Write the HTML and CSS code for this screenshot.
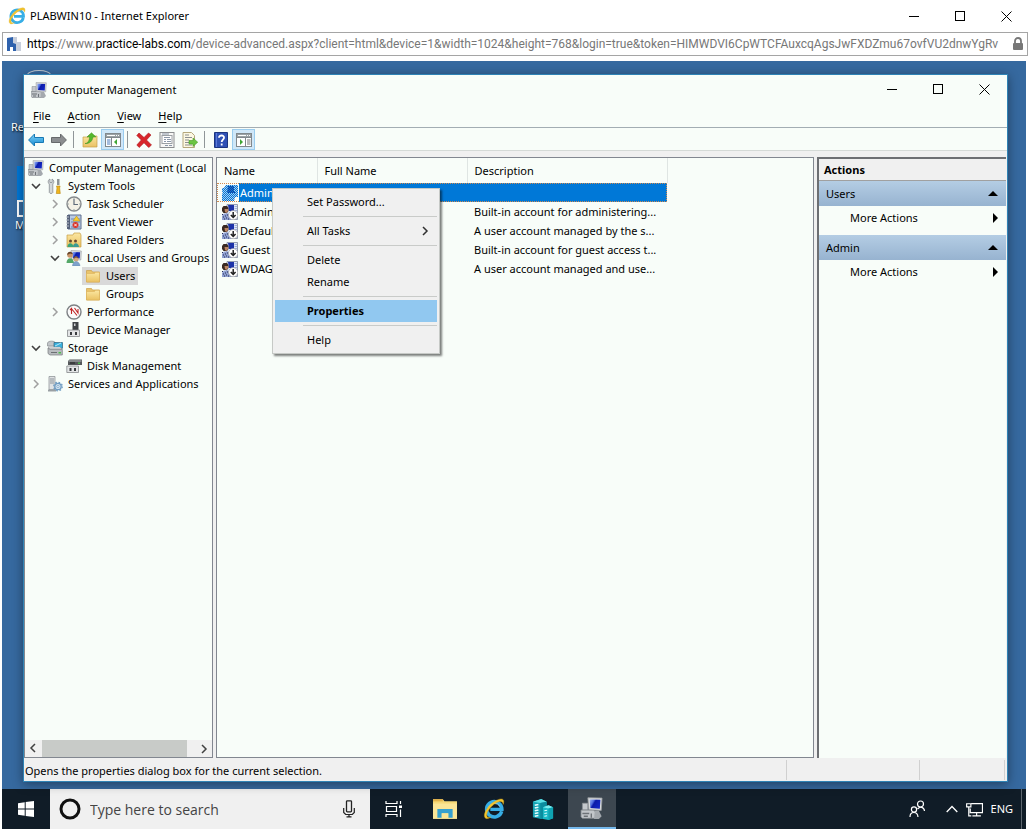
FILE: index.html
```html
<!DOCTYPE html>
<html lang="en">
<head>
<title>PLABWIN10 - Internet Explorer</title>

<meta charset="UTF-8">
<meta name="viewport" content="width=device-width, initial-scale=1.0">

<link rel="stylesheet" href="styles.css">
</head>

<body>

<!-- icon sprites -->
<svg class="sprites" aria-hidden="true">
  <defs>
    <linearGradient id="g-screen" x1="0" y1="0" x2="1" y2="0.5">
      <stop offset="0" stop-color="#9db6f0"/>
      <stop offset="0.35" stop-color="#4d6ce0"/>
      <stop offset="0.5" stop-color="#0c1ca8"/>
      <stop offset="1" stop-color="#1226c4"/>
    </linearGradient>
    <linearGradient id="g-blue" x1="0" y1="0" x2="0" y2="1">
      <stop offset="0" stop-color="#7fd4f8"/>
      <stop offset="1" stop-color="#1488d0"/>
    </linearGradient>
    <linearGradient id="g-folder" x1="0" y1="0" x2="0" y2="1">
      <stop offset="0" stop-color="#fbe7a2"/>
      <stop offset="1" stop-color="#eac263"/>
    </linearGradient>
    <symbol id="i-computer" viewBox="0 0 16 16">
      <path d="M1 4.500h4v5H1z" fill="#c4c8cc" stroke="#858a8f" stroke-width=".5"/>
      <path d="M0 9.500h9l2 1.500v3.500l-1 1H1l-1-1z" fill="#c2c6ca" stroke="#7d8388" stroke-width=".6"/>
      <path d="M1 12h5M2 14h3M7.500 12v3" stroke="#6d7277"/>
      <path d="M10 10h3l2 4-2 2H9.500z" fill="#a4a9ae"/>
      <path d="M5 .6l10.300 .2-.6 9-9-.6z" fill="#d9dbdc" stroke="#9a9ea2" stroke-width=".6"/>
      <path d="M6.300 1.800l7.800 .2-.4 6.500-6.900-.5z" fill="url(#g-screen)"/>
    </symbol>
    <symbol id="i-ie" viewBox="0 0 18 18">
      <path d="M15.300 10.800A6.300 6.300 0 1 1 15.500 9.300H6" fill="none" stroke="#37aee6" stroke-width="2.800"/>
      <path d="M4 8a5.600 5.600 0 0 1 10-1" fill="none" stroke="#9adcf7" stroke-width=".8"/>
      <path d="M2 16.500C-1 14 4 6 9 3s8-3 8 0c0 .8-.2 1.500-.6 2.300C16.500 2.500 14 2 10 4.500S1.500 13 3.500 15.500c.6.700 1.800.5 3 0-1.700 1.300-3.500 1.800-4.500 1z" fill="#f2c531" stroke="#d9a614" stroke-width=".3"/>
    </symbol>
    <symbol id="i-labs" viewBox="0 0 16 16">
      <path d="M6 1h5v5h4v9H8z" fill="#c8cfdc"/>
      <path d="M1 2l6-1v6l3 1v7H7v-4H4v4H1z" fill="#2f62ad"/>
    </symbol>
    <symbol id="i-lock" viewBox="0 0 12 14">
      <path d="M3 7V4a3 3 0 0 1 6 0v3" fill="none" stroke="#777" stroke-width="1.800"/>
      <rect x="1" y="6" width="10" height="7" rx="1" fill="#777"/>
    </symbol>
    <symbol id="i-min" viewBox="0 0 11 11"><path d="M0 5.500h10" stroke="#000"/></symbol>
    <symbol id="i-max" viewBox="0 0 11 11"><rect x=".5" y=".5" width="9" height="9" fill="none" stroke="#000"/></symbol>
    <symbol id="i-close" viewBox="0 0 11 11"><path d="M.5 .5l10 10M10.500 .5l-10 10" stroke="#000"/></symbol>
    <symbol id="i-back" viewBox="0 0 16 16"><path d="M.6 8L6.500 2v3.500h9v5h-9V14z" fill="url(#g-blue)" stroke="#1779b4"/></symbol>
    <symbol id="i-forward" viewBox="0 0 16 16"><path d="M15.400 8L9.500 2v3.500h-9v5h9V14z" fill="#8b8e90" stroke="#66696b"/></symbol>
    <symbol id="i-up" viewBox="0 0 16 16">
      <path d="M1 5h5l1-2h3l1 1h4v11H1z" fill="url(#g-folder)" stroke="#c79e45" stroke-width=".7"/>
      <path d="M3 11.500C6 11.500 7.500 8 7.500 5H5L9.500 .8 14 5h-3C10.500 9 7.500 12 3 11.500z" fill="#54b82e" stroke="#3a8f1c" stroke-width=".5"/>
    </symbol>
    <symbol id="i-pane-left" viewBox="0 0 16 16">
      <rect x=".5" y="1.500" width="15" height="13" fill="#fff" stroke="#81888c"/>
      <path d="M1 2h14v3H1z" fill="#9ba2a5"/>
      <path d="M2 3.500h8M11 3.500h1M13 3.500h1" stroke="#fff"/>
      <path d="M6.500 6v8M1 5.500h14" stroke="#81888c"/>
      <path d="M2 8h3.500M2 10h3.500M2 12h3.500" stroke="#4c7cc0"/>
      <path d="M12 7v6L9 10z" fill="#3fa535"/>
    </symbol>
    <symbol id="i-pane-right" viewBox="0 0 16 16">
      <rect x=".5" y="1.500" width="15" height="13" fill="#fff" stroke="#81888c"/>
      <path d="M1 2h14v3H1z" fill="#9ba2a5"/>
      <path d="M2 3.500h8M11 3.500h1M13 3.500h1" stroke="#fff"/>
      <path d="M9.500 6v8M1 5.500h14" stroke="#81888c"/>
      <path d="M11 8h3.500M11 10h3.500M11 12h3.500" stroke="#777"/>
      <path d="M4 7v6l3-3z" fill="#3fa535"/>
    </symbol>
    <symbol id="i-delete" viewBox="0 0 16 16">
      <path d="M3 1l5 4.500L12.500 1 15 3l-4.500 5 5 5-2.800 2.500L8 10.800 3.200 15.500.8 13l4.500-5L.8 3.500z" fill="#d8262b" stroke="#a8171b" stroke-width=".6"/>
    </symbol>
    <symbol id="i-props" viewBox="0 0 16 16">
      <rect x="1" y=".5" width="14" height="15" fill="#f7f7f5" stroke="#8b8e90"/>
      <rect x="3" y="3.500" width="10" height="8" fill="#fff" stroke="#9ba0a4"/>
      <path d="M5 5.500h6M5 7.500h2M8 7.500h4M5 9.500h2M8 9.500h4M3 2h7M6 13.500h3M10 13.500h3" stroke="#8a97a8"/>
    </symbol>
    <symbol id="i-export" viewBox="0 0 16 16">
      <path d="M1 .5h8.500l3 3v12H1z" fill="#fcf8e2" stroke="#b4a77c"/>
      <path d="M3 5.500h7M3 8h4M3 10.500h4M3 13h7M3 3h4" stroke="#8b8e90"/>
      <path d="M7 8.500h4V6l4.700 4.200L11 14.500V12H7z" fill="#6cc644" stroke="#459a25" stroke-width=".6"/>
    </symbol>
    <symbol id="i-help" viewBox="0 0 14 16">
      <path d="M.5 .5h13v15H.5z" fill="#2f51b5" stroke="#1c3580"/>
      <path d="M2.500 1v14" stroke="#5c7ad6"/>
      <path d="M5 5.800C5 2.700 10.400 2.800 10 5.800c-.2 1.700-2.300 2-2.300 4.200M7.700 11.500v2" fill="none" stroke="#fff" stroke-width="1.800"/>
    </symbol>
    <symbol id="i-down" viewBox="0 0 10 10"><path d="M1 3l4 4 4-4" fill="none" stroke="#404040" stroke-width="1.600"/></symbol>
    <symbol id="i-right" viewBox="0 0 10 10"><path d="M3 1l4 4-4 4" fill="none" stroke="#a0a0a0" stroke-width="1.500"/></symbol>
    <symbol id="i-tools" viewBox="0 0 16 16">
      <path d="M3 1v3.500h2V1c2 .8 2.500 3.500.8 5v8.500c-.5 1.300-3 1.300-3.500 0V6C.5 4.500 1 1.800 3 1z" fill="#d4d8da" stroke="#7d8386" stroke-width=".7"/>
      <path d="M10 1h2.500v6H10z" fill="#8e9497"/>
      <path d="M9.500 8h3.600l-.5 2 .7 5.500H9.300L10 10z" fill="#f0b51d" stroke="#b9860d" stroke-width=".6"/>
    </symbol>
    <symbol id="i-clock" viewBox="0 0 16 16">
      <circle cx="8" cy="8" r="7" fill="#f4f1e6" stroke="#85898c" stroke-width="1.400"/>
      <path d="M8 3v5.500h4" fill="none" stroke="#5f6b7a" stroke-width="1.200"/>
      <path d="M8 2v1M8 13v1M2 8h1M13 8h1" stroke="#9aa"/>
    </symbol>
    <symbol id="i-event" viewBox="0 0 16 16">
      <path d="M2 1h13v14H2z" fill="#b9cbe6" stroke="#5d6f8d"/>
      <path d="M1 1h3v14H1z" fill="#56627a"/>
      <path d="M0 3h3M0 6h3M0 9h3M0 12h3" stroke="#b7bdc6"/>
      <path d="M5 5h9M5 8h9M5 13h9" stroke="#6f87ae"/>
      <path d="M10.500 2l3.500 5H7z" fill="#f8cc30" stroke="#b58a0d" stroke-width=".5"/>
      <circle cx="9.500" cy="11" r="3" fill="#d93227"/>
      <path d="M8.200 9.700l2.600 2.600M10.800 9.700l-2.600 2.600" stroke="#fff" stroke-width=".9"/>
    </symbol>
    <symbol id="i-shared" viewBox="0 0 16 16">
      <path d="M1 3h6l1-2h6l1 2v12H1z" fill="url(#g-folder)" stroke="#c79e45" stroke-width=".7"/>
      <circle cx="4.500" cy="9" r="1.500" fill="#6a4a30"/>
      <circle cx="9.500" cy="9" r="1.500" fill="#6a4a30"/>
      <path d="M1.500 15c0-5 5.500-5 6 0z" fill="#3aa57a"/>
      <path d="M7 15c0-5 5.500-5 6 0z" fill="#3b9a94"/>
    </symbol>
    <symbol id="i-users" viewBox="0 0 16 16">
      <path d="M5 .6l10.300 .4-.5 9-9.300-.6z" fill="#e0e2e4" stroke="#8e9296" stroke-width=".6"/>
      <path d="M6.300 2l7.800 .2-.4 6.200-6.900-.5z" fill="url(#g-screen)"/>
      <circle cx="4" cy="5" r="2.800" fill="#c89468"/>
      <path d="M1.200 5c0-4.500 5.500-4 5.600-.8L4 3.500z" fill="#65432a"/>
      <path d="M.5 13c0-6.500 7-6.500 7.500 0z" fill="#54a868"/>
      <circle cx="10" cy="9" r="2.500" fill="#d6a77d"/>
      <path d="M7.500 9c0-4 5-3.500 5-.5L10 7.500z" fill="#725138"/>
      <path d="M6.500 16c0-6 7-6 7.500 0z" fill="#7fa3cc" stroke="#587ba5" stroke-width=".4"/>
    </symbol>
    <symbol id="i-folder" viewBox="0 0 16 16">
      <path d="M1.500 2.500h5l1 1.500h7v10h-13z" fill="#e9c46c" stroke="#cda048" stroke-width=".7"/>
      <path d="M1.500 5.500h8l1-1.200h4V14h-13z" fill="url(#g-folder)" stroke="#dbb25a" stroke-width=".6"/>
    </symbol>
    <symbol id="i-perf" viewBox="0 0 16 16">
      <circle cx="8" cy="8" r="7" fill="#fafafa" stroke="#7d8184" stroke-width="1.400"/>
      <path d="M4 6l1.500-1.500V10M5 4l6 7.500M8.500 4L12 9V5" fill="none" stroke="#c22727" stroke-width="1.100"/>
    </symbol>
    <symbol id="i-device" viewBox="0 0 16 16">
      <path d="M6.500 0h6v9h-6z" fill="#3f4346"/>
      <path d="M8 1.500h1.500V4H8z" fill="#cfd2d4"/>
      <path d="M1.500 8h12v6.500h-12z" fill="#e3e5e6" stroke="#85898c" stroke-width=".8"/>
      <path d="M4 10h2v3H4zM9 10h2v3H9z" fill="#383c3f"/>
    </symbol>
    <symbol id="i-storage" viewBox="0 0 16 16">
      <path d="M.5 3C1 .5 8 .5 8.500 3v3h-8z" fill="#c2c6c9" stroke="#7c8184" stroke-width=".6"/>
      <path d="M7 2.500h8.500v5.800H7z" fill="#38b0dd" stroke="#2f617c" stroke-width=".7"/>
      <path d="M8 6l6-3" stroke="#b9e8f7"/>
      <path d="M1 7h12l2 2H3z" fill="#e6e8e9" stroke="#8b8f92" stroke-width=".5"/>
      <path d="M1 8v5.500l2 1.500h12.300V9.300H3z" fill="#b8bcbf" stroke="#75797c" stroke-width=".7"/>
      <path d="M4 12.500h6" stroke="#6c7073"/>
      <path d="M11.500 12h2.500v1.500h-2.500z" fill="#4cc04a"/>
    </symbol>
    <symbol id="i-disk" viewBox="0 0 16 16">
      <path d="M2 3l1.500-1.500H16V7H2z" fill="#55585b"/>
      <path d="M2.500 3h13" stroke="#b5b9bb"/>
      <path d="M4 5h5" stroke="#222"/>
      <path d="M12 4.500h2V6h-2z" fill="#48b84a"/>
      <path d="M.8 8h11.700v6.500H.8z" fill="#e3e5e6" stroke="#85898c" stroke-width=".8"/>
      <path d="M3.500 10h2v3h-2zM8 10h2v3H8z" fill="#383c3f"/>
    </symbol>
    <symbol id="i-services" viewBox="0 0 16 16">
      <path d="M2 .5h6v13H2z" fill="#dfe2e4" stroke="#868b8f" stroke-width=".7"/>
      <path d="M3 3h4M3 5h4M3 7h4" stroke="#8d959b"/>
      <path d="M1 14.500h8" stroke="#9aa0a4" stroke-width="2"/>
      <circle cx="11" cy="10.500" r="3.200" fill="#cfe0ee" stroke="#6f9cc2" stroke-width="1.300"/>
      <circle cx="11" cy="10.500" r="4.300" fill="none" stroke="#6f9cc2" stroke-width="1.200" stroke-dasharray="1.700 1.670"/>
      <circle cx="11" cy="10.500" r="1.100" fill="#fff" stroke="#6f9cc2" stroke-width=".7"/>
    </symbol>
    <symbol id="i-user" viewBox="0 0 16 16">
      <path d="M5 .5h10.500v15H4z" fill="#dfe8f8" stroke="#6f7890" stroke-width=".7"/>
      <path d="M6 1h6v6H7z" fill="#1d33a8"/>
      <path d="M12.500 2.500H15M12.500 4.500H15M12 6.500h3" stroke="#8fa3d0" stroke-width=".8"/>
      <path d="M0 4l1.500-2H5l1.500 2v3L5 9H1.500L0 7z" fill="#3b2a22"/>
      <path d="M2.500 5H6v2L4.500 9 3 8z" fill="#b98463"/>
      <path d="M0 16v-4l2-2.500h4L8.500 12l.5 4z" fill="#8fa0d2"/>
      <path d="M0 10.500h1M1 13h1M3 12h1M4 14h1M2 15h1M5 11h1M6 15h1" stroke="#232c55"/>
    </symbol>
    <symbol id="i-badge" viewBox="0 0 16 16">
      <circle cx="11.200" cy="11.200" r="4.600" fill="#fff" stroke="#999" stroke-width=".6"/>
      <path d="M11.200 8v5M8.800 11l2.400 2.500 2.400-2.500" fill="none" stroke="#222" stroke-width="1.500"/>
    </symbol>
    <pattern id="p-dither" width="2" height="2" patternUnits="userSpaceOnUse">
      <path d="M0 0h1v1H0zM1 1h1v1H1z" fill="#0078d7"/>
    </pattern>
    <symbol id="i-dither" viewBox="0 0 16 16">
      <path d="M4 0h12v12h-3l-1 4H0V9l1-1-1-2V3h2z" fill="#a8cdf0"/>
      <path d="M6 1h6v5l2 2H5z" fill="#1a3d9c"/>
      <path d="M4 0h12v12h-3l-1 4H0V9l1-1-1-2V3h2z" fill="url(#p-dither)"/>
    </symbol>
    <symbol id="i-windows" viewBox="0 0 16 16">
      <path d="M0 2.300l6.700-1v6.200H0zM7.700 1.100L16 0v7.500H7.700zM0 8.500h6.700v6.200l-6.700-1zM7.700 8.500H16V16l-8.300-1.100z" fill="#fff"/>
    </symbol>
    <symbol id="i-cortana" viewBox="0 0 22 22"><circle cx="11" cy="11" r="9" fill="none" stroke="#111" stroke-width="3"/></symbol>
    <symbol id="i-mic" viewBox="0 0 12 18">
      <rect x="3.500" y=".8" width="5" height="11" rx=".8" fill="none" stroke="#222" stroke-width="1.300"/>
      <path d="M.7 8v4.500l2 2h6.600l2-2V8M6 14.500V17M3.500 16.800h5" fill="none" stroke="#222" stroke-width="1.200"/>
    </symbol>
    <symbol id="i-taskview" viewBox="0 0 18 16">
      <path d="M1 0v2.500h11V0M1 16v-2.500h11V16M1.500 5.500h10v5h-10zM15.500 0v3M15.500 8.500V16" fill="none" stroke="#fff" stroke-width="1.200"/>
      <path d="M14 4.500h3v2.500h-3z" fill="#fff"/>
    </symbol>
    <symbol id="i-explorer" viewBox="0 0 22 20">
      <path d="M0 1h9l1.500 2H22v16H0z" fill="#f6d978"/>
      <path d="M0 1h9v2H0z" fill="#e3b24a"/>
      <path d="M0 5h22v14H0z" fill="#fbe596"/>
      <path d="M4 10h14v8h-4v-4H8v4H4z" fill="#36a0cf"/>
      <path d="M8 14h6v4H8z" fill="#fbe596"/>
    </symbol>
    <symbol id="i-server" viewBox="0 0 24 24">
      <path d="M1 4l9-3 6 3v18l-6 1-9-2z" fill="#15a3b4"/>
      <path d="M1 4l9-3 6 3-7 1.500z" fill="#5de0e6"/>
      <path d="M9 5.500L16 4v18l-7 1z" fill="#0b8c9e"/>
      <path d="M3 8l4-1M3 11l4-1M3 14l4-1M3 17l4-1M3 20l4-1" stroke="#e8ffff" stroke-width="1.600"/>
      <path d="M12 10l6-2 5 2v12l-5 2-6-1z" fill="#19b9c6"/>
      <path d="M12 10l6-2 5 2-5 1.500z" fill="#7cecef"/>
      <path d="M13.500 14l3-.6M13.500 17l3-.6M13.500 20l3-.6" stroke="#d9ffff" stroke-width="1.200"/>
      <path d="M18 11.500l5-1.500v12l-5 2z" fill="#0fa2b2"/>
    </symbol>
    <symbol id="i-people" viewBox="0 0 18 18">
      <circle cx="12.500" cy="4" r="3" fill="none" stroke="#fff" stroke-width="1.200"/>
      <circle cx="6" cy="9.500" r="2.600" fill="none" stroke="#fff" stroke-width="1.200"/>
      <path d="M2 17c0-6 7.500-6 8 0M9.500 9c2.500-3 6.500-2 7 2" fill="none" stroke="#fff" stroke-width="1.200"/>
    </symbol>
    <symbol id="i-caret" viewBox="0 0 12 8"><path d="M.7 7L6 1.500 11.300 7" fill="none" stroke="#fff" stroke-width="1.300"/></symbol>
    <symbol id="i-network" viewBox="0 0 16 14">
      <path d="M5 1.500h10.500v8.500H4V6M10 10v3M6 13h8M.6 1.600h4v3h-4zM2.600 5v8H5" fill="none" stroke="#fff" stroke-width="1.100"/>
    </symbol>
  </defs>
</svg>

<header class="titlebar">
  <svg class="icon icon-ie"><use href="#i-ie"/></svg>
  <h1 class="title">PLABWIN10 - Internet Explorer</h1>
  <button class="winbtn" title="Minimize"><svg><use href="#i-min"/></svg></button>
  <button class="winbtn" title="Maximize"><svg><use href="#i-max"/></svg></button>
  <button class="winbtn" title="Close"><svg><use href="#i-close"/></svg></button>
</header>

<div class="address">
  <svg class="icon"><use href="#i-labs"/></svg>
  <div class="url"><b>https</b>://www.<b>practice-labs.com</b>/device-advanced.aspx?client=html&amp;device=1&amp;width=1024&amp;height=768&amp;login=true&amp;token=HIMWDVI6CpWTCFAuxcqAgsJwFXDZmu67ovfVU2dnwYgRv</div>
  <svg class="lock"><use href="#i-lock"/></svg>
</div>

<main class="remote">
  <div class="desktop">
    <span class="shortcut bin">Re</span>
    <span class="shortcut edge">M</span>

    <section class="window">
      <div class="titlebar">
        <svg class="icon"><use href="#i-computer"/></svg>
        <h2 class="title">Computer Management</h2>
        <button class="winbtn" title="Minimize"><svg><use href="#i-min"/></svg></button>
        <button class="winbtn" title="Maximize"><svg><use href="#i-max"/></svg></button>
        <button class="winbtn" title="Close"><svg><use href="#i-close"/></svg></button>
      </div>

      <nav class="menubar">
        <button><u>F</u>ile</button>
        <button><u>A</u>ction</button>
        <button><u>V</u>iew</button>
        <button><u>H</u>elp</button>
      </nav>

      <div class="toolbar">
        <button title="Back"><svg class="icon"><use href="#i-back"/></svg></button>
        <button title="Forward"><svg class="icon"><use href="#i-forward"/></svg></button>
        <i></i>
        <button title="Up one level"><svg class="icon"><use href="#i-up"/></svg></button>
        <button class="on" title="Show/Hide Console Tree"><svg class="icon"><use href="#i-pane-left"/></svg></button>
        <i></i>
        <button title="Delete"><svg class="icon"><use href="#i-delete"/></svg></button>
        <button title="Properties"><svg class="icon"><use href="#i-props"/></svg></button>
        <button title="Export List"><svg class="icon"><use href="#i-export"/></svg></button>
        <i></i>
        <button title="Help"><svg class="icon"><use href="#i-help"/></svg></button>
        <button class="on" title="Show/Hide Action Pane"><svg class="icon"><use href="#i-pane-right"/></svg></button>
      </div>

      <div class="panes">
        <div class="pane tree">
          <div class="nodes">
            <a href="#" class="label"><svg class="icon"><use href="#i-computer"/></svg>Computer Management (Local</a>
            <ul>
              <li>
                <div class="node"><svg class="twist"><use href="#i-down"/></svg><a href="#" class="label"><svg class="icon"><use href="#i-tools"/></svg>System Tools</a></div>
                <ul>
                  <li class="node"><svg class="twist"><use href="#i-right"/></svg><a href="#" class="label"><svg class="icon"><use href="#i-clock"/></svg>Task Scheduler</a></li>
                  <li class="node"><svg class="twist"><use href="#i-right"/></svg><a href="#" class="label"><svg class="icon"><use href="#i-event"/></svg>Event Viewer</a></li>
                  <li class="node"><svg class="twist"><use href="#i-right"/></svg><a href="#" class="label"><svg class="icon"><use href="#i-shared"/></svg>Shared Folders</a></li>
                  <li>
                    <div class="node"><svg class="twist"><use href="#i-down"/></svg><a href="#" class="label"><svg class="icon"><use href="#i-users"/></svg>Local Users and Groups</a></div>
                    <ul>
                      <li class="node"><svg class="twist"></svg><a href="#" class="label current"><svg class="icon"><use href="#i-folder"/></svg>Users</a></li>
                      <li class="node"><svg class="twist"></svg><a href="#" class="label"><svg class="icon"><use href="#i-folder"/></svg>Groups</a></li>
                    </ul>
                  </li>
                  <li class="node"><svg class="twist"><use href="#i-right"/></svg><a href="#" class="label"><svg class="icon"><use href="#i-perf"/></svg>Performance</a></li>
                  <li class="node"><svg class="twist"></svg><a href="#" class="label"><svg class="icon"><use href="#i-device"/></svg>Device Manager</a></li>
                </ul>
              </li>
              <li>
                <div class="node"><svg class="twist"><use href="#i-down"/></svg><a href="#" class="label"><svg class="icon"><use href="#i-storage"/></svg>Storage</a></div>
                <ul>
                  <li class="node"><svg class="twist"></svg><a href="#" class="label"><svg class="icon"><use href="#i-disk"/></svg>Disk Management</a></li>
                </ul>
              </li>
              <li class="node"><svg class="twist"><use href="#i-right"/></svg><a href="#" class="label"><svg class="icon"><use href="#i-services"/></svg>Services and Applications</a></li>
            </ul>
          </div>
          <div class="scrollbar">
            <button class="flip" title="Scroll left"><svg><use href="#i-right"/></svg></button>
            <div class="track"><div class="thumb"></div></div>
            <button title="Scroll right"><svg><use href="#i-right"/></svg></button>
          </div>
        </div>

        <div class="pane list">
          <table>
            <thead>
              <tr><th class="c-name">Name</th><th class="c-full">Full Name</th><th class="c-desc">Description</th></tr>
            </thead>
            <tbody>
              <tr class="selected"><td><div class="user"><svg class="icon"><use href="#i-dither"/></svg><span>Admin</span></div></td><td></td><td></td></tr>
              <tr><td><div class="user"><svg class="icon"><use href="#i-user"/><use href="#i-badge"/></svg><span>Administrator</span></div></td><td></td><td>Built-in account for administering...</td></tr>
              <tr><td><div class="user"><svg class="icon"><use href="#i-user"/><use href="#i-badge"/></svg><span>DefaultAcc...</span></div></td><td></td><td>A user account managed by the s...</td></tr>
              <tr><td><div class="user"><svg class="icon"><use href="#i-user"/><use href="#i-badge"/></svg><span>Guest</span></div></td><td></td><td>Built-in account for guest access t...</td></tr>
              <tr><td><div class="user"><svg class="icon"><use href="#i-user"/><use href="#i-badge"/></svg><span>WDAGUtil...</span></div></td><td></td><td>A user account managed and use...</td></tr>
            </tbody>
          </table>

          <div class="popup">
            <button>Set Password...</button>
            <hr>
            <button>All Tasks<svg><use href="#i-right"/></svg></button>
            <hr>
            <button>Delete</button>
            <button>Rename</button>
            <hr>
            <button class="hot">Properties</button>
            <hr>
            <button>Help</button>
          </div>
        </div>

        <aside class="actions">
          <h3>Actions</h3>
          <button class="group">Users<span class="tri-up"></span></button>
          <button class="more">More Actions<span class="tri-right"></span></button>
          <button class="group">Admin<span class="tri-up"></span></button>
          <button class="more">More Actions<span class="tri-right"></span></button>
        </aside>
      </div>

      <footer class="status">
        <span class="message">Opens the properties dialog box for the current selection.</span>
        <span class="cell-a"></span>
        <span class="cell-b"></span>
      </footer>
    </section>
  </div>

  <div class="taskbar">
    <button class="start" title="Start"><svg><use href="#i-windows"/></svg></button>
    <label class="search">
      <svg class="cortana"><use href="#i-cortana"/></svg>
      <input type="text" placeholder="Type here to search" aria-label="Search">
      <svg class="mic"><use href="#i-mic"/></svg>
    </label>
    <button class="task view" title="Task View"><svg><use href="#i-taskview"/></svg></button>
    <button class="task" title="File Explorer"><svg><use href="#i-explorer"/></svg></button>
    <button class="task" title="Internet Explorer"><svg><use href="#i-ie"/></svg></button>
    <button class="task" title="Server Manager"><svg><use href="#i-server"/></svg></button>
    <button class="task active" title="Computer Management"><svg><use href="#i-computer"/></svg></button>
    <div class="tray">
      <button title="People"><svg class="people"><use href="#i-people"/></svg></button>
      <button title="Show hidden icons"><svg class="caret"><use href="#i-caret"/></svg></button>
      <button title="Network"><svg class="net"><use href="#i-network"/></svg></button>
      <button class="lang">ENG</button>
      <button class="peek" title="Show desktop"></button>
    </div>
  </div>
</main>

</body>
</html>
```

FILE: styles.css
```css
* {
  box-sizing: border-box;
}
html {
  background: #fff;
}
body {
  min-height: 100vh;
  margin: 0;
  display: flex;
  flex-direction: column;
  font: 11px/18px "Noto Sans", "Open Sans", sans-serif;
  color: #000;
}
button {
  margin: 0;
  padding: 0;
  border: 0;
  background: none;
  font: inherit;
  color: inherit;
  display: flex;
  align-items: center;
}
a {
  color: inherit;
  text-decoration: none;
}
ul {
  margin: 0;
  padding: 0;
  list-style: none;
}
svg {
  flex: none;
}
.sprites {
  position: absolute;
  width: 0;
  height: 0;
}
.icon {
  width: 16px;
  height: 16px;
}
.icon-ie {
  width: 18px;
  height: 18px;
}

/* title bars, outer and inner */
.titlebar {
  height: 32px;
  padding: 0 3px 0 8px;
  display: flex;
  align-items: center;
  gap: 4px;
}
.title {
  flex: 1;
  margin: 0;
  font-size: 11px;
  font-weight: 400;
}
.winbtn {
  width: 42px;
  height: 30px;
  justify-content: center;
}
.winbtn svg {
  width: 11px;
  height: 11px;
}

.address {
  height: 24px;
  margin: 0 2px 5px;
  padding: 0 3px;
  border: 1px solid #a5a5a5;
  display: flex;
  align-items: center;
  gap: 5px;
}
.url {
  flex: 1;
  min-width: 0;
  overflow: hidden;
  white-space: nowrap;
  font-family: Roboto, "Open Sans", sans-serif;
  font-size: 12px;
  color: #777;
}
.url b {
  font-weight: 400;
  color: #000;
}
.lock {
  width: 12px;
  height: 14px;
}

.remote {
  flex: 1;
  margin: 0 4px 4px 2px;
  display: flex;
  flex-direction: column;
}
.desktop {
  flex: 1;
  position: relative;
  padding: 13px 18px 7px 21px;
  display: flex;
  background: #36699f;
}
/* icons on the desktop, mostly covered by the window */
.shortcut {
  position: absolute;
  left: 9px;
  color: #fff;
  text-shadow: 1px 1px 2px #000;
}
.bin {
  top: 57px;
}
.bin::before {
  content: "";
  position: absolute;
  left: 16px;
  top: -48px;
  width: 22px;
  height: 8px;
  border: 1px solid #bfc9d2;
  border-radius: 50%;
}
.edge {
  left: 13px;
  top: 155px;
}
.edge::before {
  content: "";
  position: absolute;
  left: 2px;
  top: -50px;
  width: 20px;
  height: 48px;
  background: #0078d7;
}
.edge::after {
  content: "";
  position: absolute;
  left: 2px;
  top: -16px;
  width: 8px;
  height: 13px;
  background: #36699f;
  border: 2px solid #fff;
}

.window {
  position: relative;
  flex: 1;
  min-width: 0;
  display: flex;
  flex-direction: column;
  background: #f8fdf9;
  border: 1px solid #2f83b5;
  box-shadow: 0 2px 10px rgba(0, 0, 0, .4);
}
.window .titlebar {
  height: 29px;
  padding: 0 2px 0 7px;
  gap: 4px;
}
.window .title {
  padding-left: 1px;
}
.menubar {
  height: 24px;
  padding-left: 9px;
  display: flex;
  gap: 17px;
  border-bottom: 1px solid #a3adb3;
}
.menubar u {
  text-underline-offset: 2px;
}
.toolbar {
  height: 23px;
  padding-top: 1px;
  display: flex;
  border-bottom: 1px solid #d5dad7;
}
.toolbar button {
  width: 23px;
  justify-content: center;
}
.toolbar .on {
  background: #cfe7f8;
  border: 1px solid #9accee;
}
.toolbar i {
  width: 1px;
  margin: 2px 4px 2px 3px;
  background: #8f9698;
}

.panes {
  flex: 1;
  padding-top: 6px;
  display: grid;
  grid-template-columns: 189px minmax(0, 1fr) 190px;
  gap: 3px;
  background: #f0f0f0;
}
.pane {
  border: 1px solid #828790;
  background: #f8fdf9;
}

.tree {
  min-width: 0;
  display: flex;
  flex-direction: column;
}
.nodes {
  flex: 1;
  padding-top: 1px;
  overflow: hidden;
  white-space: nowrap;
}
.nodes > ul {
  padding-left: 3px;
}
.nodes ul ul {
  padding-left: 19px;
}
.node {
  display: flex;
  align-items: center;
}
.twist {
  width: 16px;
  height: 10px;
}
.label {
  height: 18px;
  padding: 0 3px;
  display: flex;
  align-items: center;
  gap: 5px;
}
.current {
  background: #d9d9d9;
}
.scrollbar {
  height: 17px;
  display: flex;
  background: #f0f0f0;
}
.scrollbar button {
  width: 17px;
  justify-content: center;
}
.scrollbar svg {
  width: 10px;
  height: 10px;
}
.scrollbar use {
  filter: brightness(.4);
}
.flip {
  transform: rotate(180deg);
}
.track {
  flex: 1;
  display: flex;
}
.thumb {
  width: 95%;
  background: #c8cbc8;
}

.list {
  position: relative;
}
.list table {
  width: 450px;
  table-layout: fixed;
  border-collapse: collapse;
}
.list th {
  height: 25px;
  padding: 0 7px;
  border-right: 1px solid #dfe5e3;
  font-weight: 400;
  text-align: left;
}
.c-name {
  width: 100px;
}
.c-full {
  width: 150px;
}
.c-desc {
  width: 200px;
}
.list td {
  height: 19px;
  padding: 0 0 0 7px;
  white-space: nowrap;
  overflow: hidden;
}
.list td:first-child {
  padding-left: 5px;
}
.user {
  display: flex;
  align-items: center;
  gap: 2px;
}
.selected {
  color: #fff;
  background: linear-gradient(90deg, #f8fdf9 22px, #0078d7 22px);
  outline: 1px dotted #d08a50;
  outline-offset: -1px;
}

.popup {
  position: absolute;
  left: 55px;
  top: 30px;
  width: 168px;
  padding: 2px;
  border: 1px solid #c6c9c6;
  background: #f0f0f0;
  box-shadow: 2px 2px 2px rgba(0, 0, 0, .5);
}
.popup button {
  width: 100%;
  height: 22px;
  padding: 0 7px 0 32px;
  justify-content: space-between;
}
.popup hr {
  height: 1px;
  margin: 3px 0 3px 28px;
  border: 0;
  background: #c9cbc9;
}
.popup .hot {
  background: #91c8f0;
  font-weight: 700;
}
.popup svg {
  width: 10px;
  height: 10px;
  filter: brightness(.3);
}

.actions {
  border: 2px solid #6d6f73;
  border-width: 2px 0 0 2px;
  background: #f8fdf9;
  margin-right: 1px;
}
.actions h3 {
  height: 22px;
  margin: 0;
  padding-left: 5px;
  border-bottom: 1px solid #a0a0a0;
  background: #f0f0f0;
  font-size: 11px;
  line-height: 21px;
}
.actions button {
  width: 100%;
  padding: 0 8px 0 7px;
  justify-content: space-between;
}
.actions .group {
  height: 25px;
  background: linear-gradient(#b4cde4, #97b3d0);
}
.actions .more {
  height: 24px;
  margin-bottom: 5px;
  padding-left: 31px;
}
.tri-up {
  border: 5px solid transparent;
  border-top: 0;
  border-bottom-color: #000;
}
.tri-right {
  border: 5px solid transparent;
  border-right: 0;
  border-left-color: #000;
}

.status {
  height: 23px;
  padding: 2px 2px 1px 1px;
  display: flex;
  background: #f0f0f0;
  line-height: 22px;
}
.message {
  flex: 1;
}
.cell-a {
  width: 133px;
  border-left: 1px solid #d0d0d0;
}
.cell-b {
  width: 86px;
  border: 1px solid #d0d0d0;
  border-width: 0 1px;
}

.taskbar {
  height: 40px;
  display: flex;
  background: #101c27;
  color: #fff;
}
.start {
  width: 48px;
  justify-content: center;
}
.start svg {
  width: 16px;
  height: 16px;
}
.search {
  width: 320px;
  padding: 0 15px 0 9px;
  display: flex;
  align-items: center;
  gap: 9px;
  background: #f0f0f0;
}
.search input {
  flex: 1;
  min-width: 0;
  padding: 0;
  border: 0;
  outline: 0;
  background: none;
  font: 14px "Open Sans", "Noto Sans", sans-serif;
}
.search input::placeholder {
  color: #444;
}
.cortana {
  width: 22px;
  height: 22px;
}
.mic {
  width: 12px;
  height: 18px;
}
.task {
  width: 48px;
  margin-right: 1px;
  justify-content: center;
}
.task svg {
  width: 24px;
  height: 22px;
}
.view {
  margin-right: 3px;
}
.view svg {
  width: 18px;
  height: 16px;
}
.active {
  background: #3d4750;
  border-bottom: 2px solid #76b9ed;
}
.tray {
  margin-left: auto;
  display: flex;
  gap: 8px;
}
.people {
  width: 18px;
  height: 18px;
  margin-right: 12px;
}
.caret {
  width: 12px;
  height: 8px;
}
.net {
  width: 17px;
  height: 15px;
}
.peek {
  width: 5px;
  border-left: 1px solid #5d666e;
}
```
